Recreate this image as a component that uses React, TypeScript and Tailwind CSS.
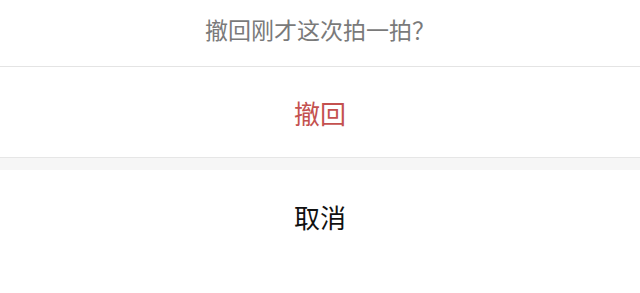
export default function App() {
  const font = { fontFamily: '"Noto Sans CJK SC", "Noto Sans", sans-serif' };
  return (
    <div className="w-[640px] h-[293px] bg-white flex flex-col overflow-hidden" style={font}>
      <div className="h-[67px] pb-[8px] flex items-center justify-center text-[23px] text-[#7a7a7a] border-b border-[#e4e4e4]">
        撤回刚才这次拍一拍？
      </div>
      <div className="h-[91px] flex items-center justify-center text-[26px] text-[#c4514f] border-b border-[#e6e6e6]">
        撤回
      </div>
      <div className="h-[12px] bg-[#f6f6f6]" />
      <div className="h-[94px] pb-[2px] flex items-center justify-center text-[26px] text-[#111111]">
        取消
      </div>
    </div>
  );
}
